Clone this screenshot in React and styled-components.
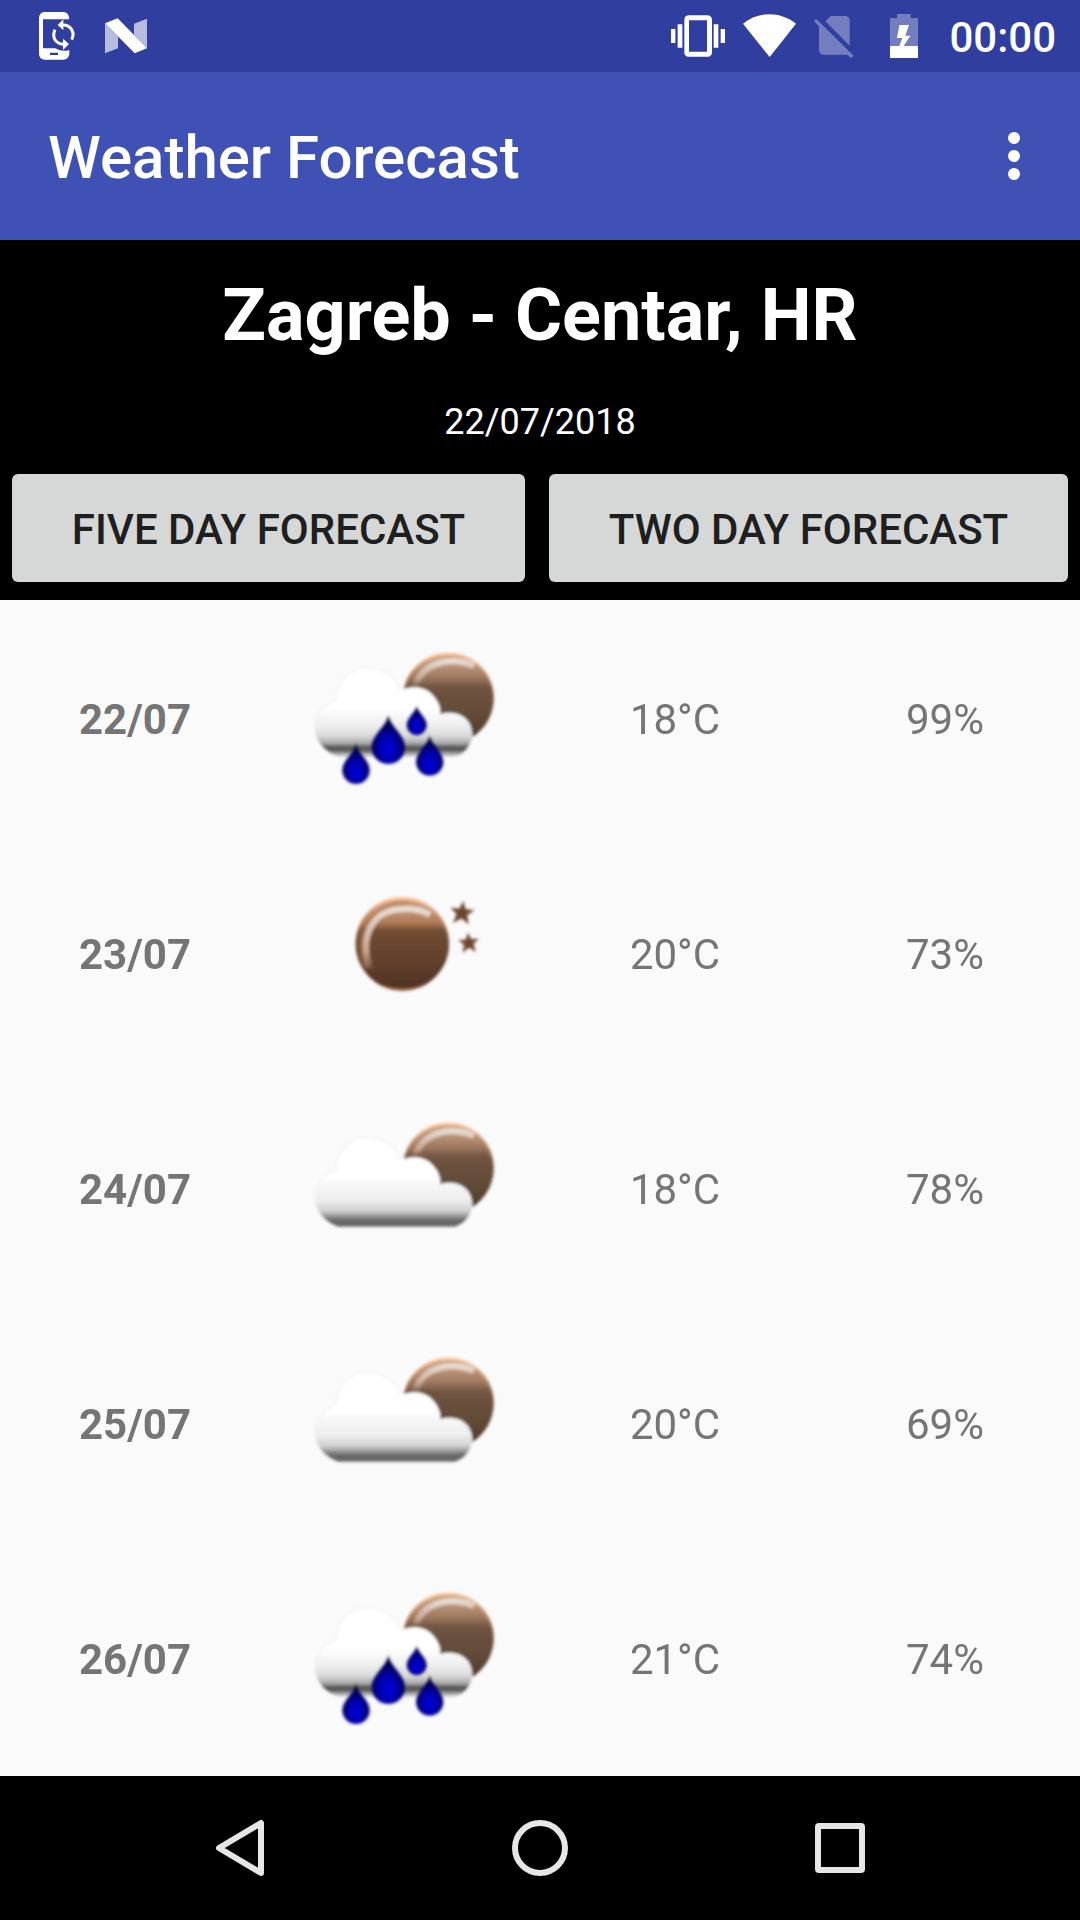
import React from "react";
import styled, { createGlobalStyle } from "styled-components";

const GlobalStyle = createGlobalStyle`
  *, *::before, *::after { box-sizing: border-box; }
  body { margin: 0; background: #000; }
  button { font-family: inherit; border: 0; margin: 0; padding: 0; cursor: pointer; }
  svg { display: block; }
`;

const Screen = styled.div`
  display: flex;
  flex-direction: column;
  min-height: 100vh;
  background: #fafafa;
  font-family: Roboto, "Noto Sans", sans-serif;
`;

const StatusBar = styled.div`
  display: flex;
  align-items: center;
  justify-content: space-between;
  height: 72px;
  padding: 0 24px 0 39px;
  background: #303f9f;
  color: #fff;
`;

const StatusGroup = styled.div`
  display: flex;
  align-items: center;
  gap: ${(p) => p.$gap}px;
`;

const Clock = styled.time`
  padding-top: 4px;
  font-size: 42px;
  font-weight: 500;
  line-height: 48px;
`;

const AppBar = styled.header`
  display: flex;
  align-items: center;
  justify-content: space-between;
  height: 168px;
  padding: 0 36px 0 48px;
  background: #3f51b5;
  color: #fff;
`;

const AppTitle = styled.h1`
  margin: 0;
  padding-top: 4px;
  font-size: 60px;
  font-weight: 500;
  line-height: 72px;
`;

const MenuButton = styled.button`
  width: 60px;
  height: 96px;
  background: transparent;
  display: grid;
  place-items: center;
`;

const Summary = styled.section`
  padding: 34px 12px 18px;
  background: #000;
  color: #fff;
  text-align: center;
`;

const City = styled.h2`
  margin: 0 0 43px;
  font-size: 72px;
  font-weight: 700;
  line-height: 84px;
`;

const Today = styled.p`
  margin: 0 0 31px;
  font-size: 36px;
  line-height: 42px;
`;

const Choices = styled.div`
  display: flex;
  gap: 24px;
`;

const ChoiceButton = styled.button`
  flex: 1 1 auto;
  height: 108px;
  padding-top: 4px;
  border-radius: 6px;
  background: #d6d7d7;
  color: #1e1f1f;
  font-size: 42px;
  font-weight: 500;
  line-height: 48px;
  text-transform: uppercase;
`;

const Content = styled.main`
  flex: 1;
`;

const ForecastTable = styled.table`
  width: 100%;
  table-layout: fixed;
  border-collapse: collapse;
  color: #757575;
  font-size: 42px;
  line-height: 48px;
  text-align: center;
`;

const Row = styled.tr`
  height: 235px;
`;

const Day = styled.th`
  padding: 4px 0 0;
  font-weight: 700;
`;

const IconCell = styled.td`
  padding: 0;
`;

const Cell = styled.td`
  padding: 4px 0 0;
`;

const IconWrap = styled.div`
  display: flex;
  justify-content: center;
`;

const NavBar = styled.nav`
  display: flex;
  height: 144px;
  padding: 0 90px;
  background: #000;
`;

const NavButton = styled.button`
  flex: 1;
  display: grid;
  place-items: center;
  background: transparent;
`;

function PhoneSyncIcon() {
  return (
    <svg width="36" height="72" viewBox="117 0 108 216" aria-hidden="true">
      <path
        fill="#fff"
        fillRule="evenodd"
        d="M133 36H190Q207 37 208 58H129V145H166Q186 157 208 150V162Q206 178 190 179H133Q118 177 117 162V53Q118 38 133 36ZM150 158V165H174V158Z"
      />
      <path fill="none" stroke="#fff" strokeWidth="9" d="M165 89C155 112 166 131 190 133M187 75C213 74 226 98 215 119" />
      <path fill="#fff" d="M190 58V91L173 75ZM189 116L207 132L189 150Z" />
    </svg>
  );
}

function NougatIcon() {
  return (
    <svg width="42" height="72" viewBox="315 0 126 216" aria-hidden="true">
      <path fill="#fff" fillOpacity=".65" d="M315 70L354 110V145L315 160ZM402 71L441 56V145L402 105Z" />
      <path fill="#fff" d="M315 70L353 55L441 145L404 160Z" />
    </svg>
  );
}

function VibrateIcon() {
  return (
    <svg width="54" height="72" viewBox="93 0 162 216" aria-hidden="true">
      <path fill="#fff" d="M93 87h13v42H93zM113 73h14v70h-14zM221 73h14v70h-14zM242 87h13v42h-13z" />
      <path
        fill="#fff"
        fillRule="evenodd"
        d="M145 46H203Q215 47 216 59V158Q215 169 203 170H145Q134 169 133 158V59Q134 47 145 46ZM147 61V155H201V61Z"
      />
    </svg>
  );
}

function WifiIcon() {
  return (
    <svg width="53" height="72" viewBox="309 0 159 216" aria-hidden="true">
      <path fill="#fff" d="M309 71C356 33 421 33 468 71L389 171Z" />
    </svg>
  );
}

function NoSimIcon() {
  return (
    <svg width="40" height="72" viewBox="523 0 120 216" aria-hidden="true">
      <g fill="#fff" opacity=".33">
        <path d="M557 64L574 48H618Q630 50 630 61V137Z" />
        <path d="M529 56L642 167L634 174L623 164H551Q539 163 538 151V79L523 64Z" />
      </g>
    </svg>
  );
}

function BatteryIcon() {
  return (
    <svg width="59" height="72" viewBox="696 0 177 216" aria-hidden="true">
      <path fill="#fff" fillOpacity=".33" d="M771 42h41v12h22v84h-84V54h21z" />
      <path fill="#fff" d="M750 138h28l9-24h-16l7-39h29l-11 32h15l-20 31h43v36h-84z" />
    </svg>
  );
}

function MoreIcon() {
  return (
    <svg width="12" height="48" viewBox="0 0 12 48" fill="#fff" aria-hidden="true">
      <circle cx="6" cy="6" r="6" />
      <circle cx="6" cy="24" r="6" />
      <circle cx="6" cy="42" r="6" />
    </svg>
  );
}

/* Gradients and the soft edge shared by all weather drawings. */
function WeatherDefs() {
  return (
    <svg width="0" height="0" style={{ position: "absolute" }} aria-hidden="true">
      <defs>
        <filter id="soft" x="-10%" y="-10%" width="120%" height="120%">
          <feGaussianBlur stdDeviation="5" />
        </filter>
        <linearGradient id="hiddenMoon" gradientUnits="userSpaceOnUse" x1="0" y1="66" x2="0" y2="340">
          <stop offset="0" stopColor="#d6a581" />
          <stop offset=".1" stopColor="#c19b80" />
          <stop offset=".26" stopColor="#a07b61" />
          <stop offset=".38" stopColor="#6f5341" />
          <stop offset=".65" stopColor="#634c39" />
          <stop offset="1" stopColor="#4a3626" />
        </linearGradient>
        <linearGradient id="fullMoon" gradientUnits="userSpaceOnUse" x1="0" y1="50" x2="0" y2="330">
          <stop offset="0" stopColor="#dba079" />
          <stop offset=".14" stopColor="#c29276" />
          <stop offset=".27" stopColor="#b07b57" />
          <stop offset=".36" stopColor="#714b31" />
          <stop offset=".75" stopColor="#5d3d2a" />
          <stop offset="1" stopColor="#4b3022" />
        </linearGradient>
        <linearGradient id="rimFade" x1="0" y1="0" x2="0" y2="1">
          <stop offset="0" stopColor="#fbc79d" />
          <stop offset=".25" stopColor="#c08a66" stopOpacity=".7" />
          <stop offset=".5" stopColor="#7d5339" stopOpacity=".2" />
          <stop offset=".9" stopColor="#6d4027" stopOpacity=".1" />
          <stop offset="1" stopColor="#b8764d" stopOpacity=".7" />
        </linearGradient>
        <linearGradient id="shine" x1="0" y1="1" x2="0" y2="0">
          <stop offset="0" stopColor="#c7a58f" stopOpacity="0" />
          <stop offset=".3" stopColor="#c7a58f" />
          <stop offset="1" stopColor="#e6dad2" />
        </linearGradient>
        <linearGradient id="dryCloud" gradientUnits="userSpaceOnUse" x1="0" y1="110" x2="0" y2="380">
          <stop offset="0" stopColor="#fff" />
          <stop offset=".44" stopColor="#fff" />
          <stop offset=".52" stopColor="#f7f7f7" />
          <stop offset=".7" stopColor="#ededed" />
          <stop offset=".82" stopColor="#d0d0d0" />
          <stop offset=".88" stopColor="#939393" />
          <stop offset=".92" stopColor="#686868" />
          <stop offset="1" stopColor="#666" />
        </linearGradient>
        <linearGradient id="wetCloud" gradientUnits="userSpaceOnUse" x1="0" y1="110" x2="0" y2="374">
          <stop offset="0" stopColor="#fff" />
          <stop offset=".46" stopColor="#fff" />
          <stop offset=".66" stopColor="#eee" />
          <stop offset=".78" stopColor="#d9d9d9" />
          <stop offset=".86" stopColor="#aaa" />
          <stop offset=".92" stopColor="#484848" />
          <stop offset=".96" stopColor="#777" />
          <stop offset="1" stopColor="#ccc" />
        </linearGradient>
        <radialGradient id="drop" cx=".5" cy=".7" r=".62">
          <stop offset="0" stopColor="#0000dc" />
          <stop offset=".4" stopColor="#0000b4" />
          <stop offset=".75" stopColor="#000064" />
          <stop offset="1" stopColor="#00002e" />
        </radialGradient>
      </defs>
    </svg>
  );
}

const CLOUD =
  "M146 378C102 362 74 328 75 288C77 248 101 222 136 210C142 150 180 111 230 111C280 111 318 138 330 182C350 168 398 160 427 192C446 212 454 234 450 250C503 236 546 262 547 310C546 340 524 370 494 378Z";

const DROP = "M0 -95C4 -62 50 -36 50 2A50 50 0 0 1 -50 2C-50 -36 -4 -62 0 -95Z";

const DROPS = [
  { x: 295, y: 348, scale: 1 },
  { x: 380, y: 282, scale: 0.6 },
  { x: 198, y: 417, scale: 0.82 },
  { x: 419, y: 392, scale: 0.82 },
];

function CloudyMoonIcon({ rain }) {
  return (
    <svg
      width="230"
      height="235"
      viewBox="0 -92 690 705"
      role="img"
      aria-label={rain ? "Rain" : "Partly cloudy"}
    >
      <g filter="url(#soft)">
        <circle cx="475" cy="203" r="136" fill="url(#hiddenMoon)" />
        <circle cx="475" cy="203" r="133" fill="none" stroke="url(#rimFade)" strokeWidth="8" />
        <path d="M376 166C396 98 478 74 552 106" fill="none" stroke="url(#shine)" strokeWidth="19" />
        <path d={CLOUD} fill={rain ? "url(#wetCloud)" : "url(#dryCloud)"} />
        <path
          d="M76 278C80 246 101 222 136 210C142 150 180 111 230 111C280 111 318 138 330 178"
          fill="none"
          stroke="#f0f0f0"
          strokeWidth="4"
        />
      </g>
      {rain && (
        <g filter="url(#soft)">
          {DROPS.map((d) => (
            <path
              key={d.x}
              d={DROP}
              fill="url(#drop)"
              transform={`translate(${d.x} ${d.y}) scale(${d.scale})`}
            />
          ))}
        </g>
      )}
    </svg>
  );
}

const STAR = "M0 -38L10 -13L38 -13L17 5L25 34L0 17L-25 34L-17 5L-38 -13L-10 -13Z";

function ClearNightIcon() {
  return (
    <svg width="230" height="235" viewBox="-120 -137 690 705" role="img" aria-label="Clear night">
      <g filter="url(#soft)">
        <circle cx="217" cy="190" r="140" fill="url(#fullMoon)" />
        <circle cx="217" cy="190" r="137" fill="none" stroke="url(#rimFade)" strokeWidth="8" />
        <path d="M112 262C70 185 105 66 235 70" fill="none" stroke="#b47c57" strokeWidth="16" strokeOpacity=".5" />
        <path d="M124 268C86 190 116 94 205 86C242 82 270 86 300 102" fill="none" stroke="url(#shine)" strokeWidth="19" />
        <g fill="#6d452e">
          <path d={STAR} transform="translate(396 97) rotate(6) scale(.95)" />
          <path d={STAR} transform="translate(416 187) rotate(-4) scale(.82)" />
        </g>
      </g>
    </svg>
  );
}

function WeatherIcon({ kind }) {
  if (kind === "clear") return <ClearNightIcon />;
  return <CloudyMoonIcon rain={kind === "rain"} />;
}

const FORECAST = [
  { day: "22/07", kind: "rain", temperature: "18°C", humidity: "99%" },
  { day: "23/07", kind: "clear", temperature: "20°C", humidity: "73%" },
  { day: "24/07", kind: "cloudy", temperature: "18°C", humidity: "78%" },
  { day: "25/07", kind: "cloudy", temperature: "20°C", humidity: "69%" },
  { day: "26/07", kind: "rain", temperature: "21°C", humidity: "74%" },
];

export default function App() {
  return (
    <>
      <GlobalStyle />
      <WeatherDefs />
      <Screen>
        <StatusBar>
          <StatusGroup $gap={30}>
            <PhoneSyncIcon />
            <NougatIcon />
          </StatusGroup>
          <StatusGroup $gap={18}>
            <VibrateIcon />
            <WifiIcon />
            <NoSimIcon />
            <BatteryIcon />
            <Clock>00:00</Clock>
          </StatusGroup>
        </StatusBar>
        <AppBar>
          <AppTitle>Weather Forecast</AppTitle>
          <MenuButton aria-label="More options">
            <MoreIcon />
          </MenuButton>
        </AppBar>
        <Summary>
          <City>Zagreb - Centar, HR</City>
          <Today>22/07/2018</Today>
          <Choices>
            <ChoiceButton>Five day forecast</ChoiceButton>
            <ChoiceButton>Two day forecast</ChoiceButton>
          </Choices>
        </Summary>
        <Content>
          <ForecastTable>
            <tbody>
              {FORECAST.map((f) => (
                <Row key={f.day}>
                  <Day scope="row">{f.day}</Day>
                  <IconCell>
                    <IconWrap>
                      <WeatherIcon kind={f.kind} />
                    </IconWrap>
                  </IconCell>
                  <Cell>{f.temperature}</Cell>
                  <Cell>{f.humidity}</Cell>
                </Row>
              ))}
            </tbody>
          </ForecastTable>
        </Content>
        <NavBar>
          <NavButton aria-label="Back">
            <svg width="60" height="60" viewBox="0 0 60 60" fill="none" stroke="#e6e6e6" strokeWidth="6" strokeLinejoin="round">
              <path d="M51 5V55L9 30Z" />
            </svg>
          </NavButton>
          <NavButton aria-label="Home">
            <svg width="60" height="60" viewBox="0 0 60 60" fill="none" stroke="#e6e6e6" strokeWidth="6">
              <circle cx="30" cy="30" r="25" />
            </svg>
          </NavButton>
          <NavButton aria-label="Recent apps">
            <svg width="60" height="60" viewBox="0 0 60 60" fill="none" stroke="#e6e6e6" strokeWidth="6" strokeLinejoin="round">
              <rect x="8" y="8" width="44" height="44" rx="1" />
            </svg>
          </NavButton>
        </NavBar>
      </Screen>
    </>
  );
}
